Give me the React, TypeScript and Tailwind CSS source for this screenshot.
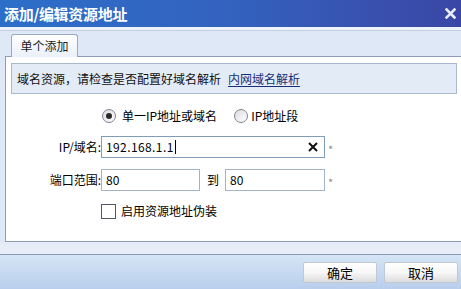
import React from "react";

function Radio({ checked }: { checked?: boolean }) {
  return (
    <span className="w-[14px] h-[14px] rounded-full border border-[#7c8593] bg-linear-to-br from-[#dcdcdc] to-white flex items-center justify-center shrink-0">
      {checked && <span className="w-[6px] h-[6px] rounded-full bg-[#2a2a2a]" />}
    </span>
  );
}

export default function App() {
  return (
    <div className="w-[461px] h-[289px] overflow-hidden flex flex-col bg-[#dfe8f6] text-[12px] leading-none text-black font-['Noto_Sans_CJK_SC',sans-serif]">
      {/* Title bar */}
      <div className="h-[27px] shrink-0 flex items-center justify-between bg-linear-to-r from-[#2c6fc9] via-[#3362bf] to-[#3a46a5] relative">
        <span className="pl-[4px] text-[15px] font-bold text-white tracking-[-0.3px]">添加/编辑资源地址</span>
        <svg width="11" height="11" viewBox="0 0 11 11" className="mr-[5px]">
          <path d="M1.5 1.5 L9.5 9.5 M9.5 1.5 L1.5 9.5" stroke="#e8ecf8" strokeWidth="2.6" strokeLinecap="square" />
        </svg>
      </div>
      <div className="h-[4px] shrink-0 bg-[#eef3fa] border-b border-[#c3cfe0]" />
      {/* Tab strip */}
      <div className="h-[25px] shrink-0 flex items-end pl-[11px]">
        <div className="relative -mb-px z-10 w-[67px] h-[23px] border border-b-0 border-[#9aaac3] rounded-t-[3px] bg-linear-to-b from-white to-[#eaf1fa] flex items-center justify-center text-[12px] text-[#1a1a1a]">
          单个添加
        </div>
      </div>
      {/* Panel */}
      <div className="ml-[5px] h-[186px] shrink-0 border border-r-0 border-[#8d9db5] bg-white flex flex-col">
        <div className="mt-[6px] ml-[5px] w-[446px] h-[31px] border border-[#a9b8cc] bg-[#e3ebf7] flex items-center pl-[5px]">
          <span className="text-[#111]">域名资源，请检查是否配置好域名解析</span>
          <span className="ml-[7px] text-[#15307a] underline underline-offset-2">内网域名解析</span>
        </div>
        {/* radio row */}
        <div className="mt-[11px] h-[22px] flex items-center pl-[96px]">
          <Radio checked />
          <span className="ml-[6px]">单一IP地址或域名</span>
          <span className="ml-[17px]"><Radio /></span>
          <span className="ml-[3px]">IP地址段</span>
        </div>
        {/* IP row */}
        <div className="mt-[9px] h-[22px] flex items-center">
          <span className="w-[95px] text-right">IP/域名:</span>
          <div className="w-[224px] h-[22px] border border-[#7f9db9] flex items-center pl-[4px] pr-[6px]">
            <span className="text-[12px] tracking-[0.4px]">192.168.1.1</span>
            <span className="ml-[1px] w-px h-[14px] bg-black" />
            <span className="flex-1" />
            <svg width="10" height="10" viewBox="0 0 10 10">
              <path d="M1 1 L9 9 M9 1 L1 9" stroke="#111" strokeWidth="2" />
            </svg>
          </div>
          <span className="ml-[3px] pt-[5px] text-[11px] text-[#888]">*</span>
        </div>
        {/* port row */}
        <div className="mt-[11px] h-[22px] flex items-center">
          <span className="w-[95px] text-right">端口范围:</span>
          <div className="w-[99px] h-[22px] border border-[#a4b4c8] flex items-center pl-[4px]">80</div>
          <span className="ml-[7px] w-[18px]">到</span>
          <div className="w-[100px] h-[22px] border border-[#a4b4c8] flex items-center pl-[4px]">80</div>
          <span className="ml-[3px] pt-[5px] text-[11px] text-[#888]">*</span>
        </div>
        {/* checkbox row */}
        <div className="mt-[12px] h-[16px] flex items-center pl-[95px]">
          <span className="w-[15px] h-[15px] border border-[#4f5864] bg-white" />
          <span className="ml-[5px]">启用资源地址伪装</span>
        </div>
      </div>
      <div className="h-[12px] shrink-0 bg-linear-to-b from-[#e4ecf7] to-[#e9eff8]" />
      {/* footer */}
      <div className="flex-1 border-t border-[#8c9cb4] bg-linear-to-b from-[#d6e5f6] to-[#b8ceec] flex justify-end items-start pt-[7px] pr-[3px] gap-[7px]">
        <button className="w-[74px] h-[21px] rounded-[2px] border border-[#c2c8d0] bg-linear-to-b from-white via-[#f7f7f7] to-[#dcdcdc] text-[13px] text-black flex items-center justify-center">确定</button>
        <button className="w-[74px] h-[21px] rounded-[2px] border border-[#c2c8d0] bg-linear-to-b from-white via-[#f7f7f7] to-[#dcdcdc] text-[13px] text-black flex items-center justify-center">取消</button>
      </div>
    </div>
  );
}
